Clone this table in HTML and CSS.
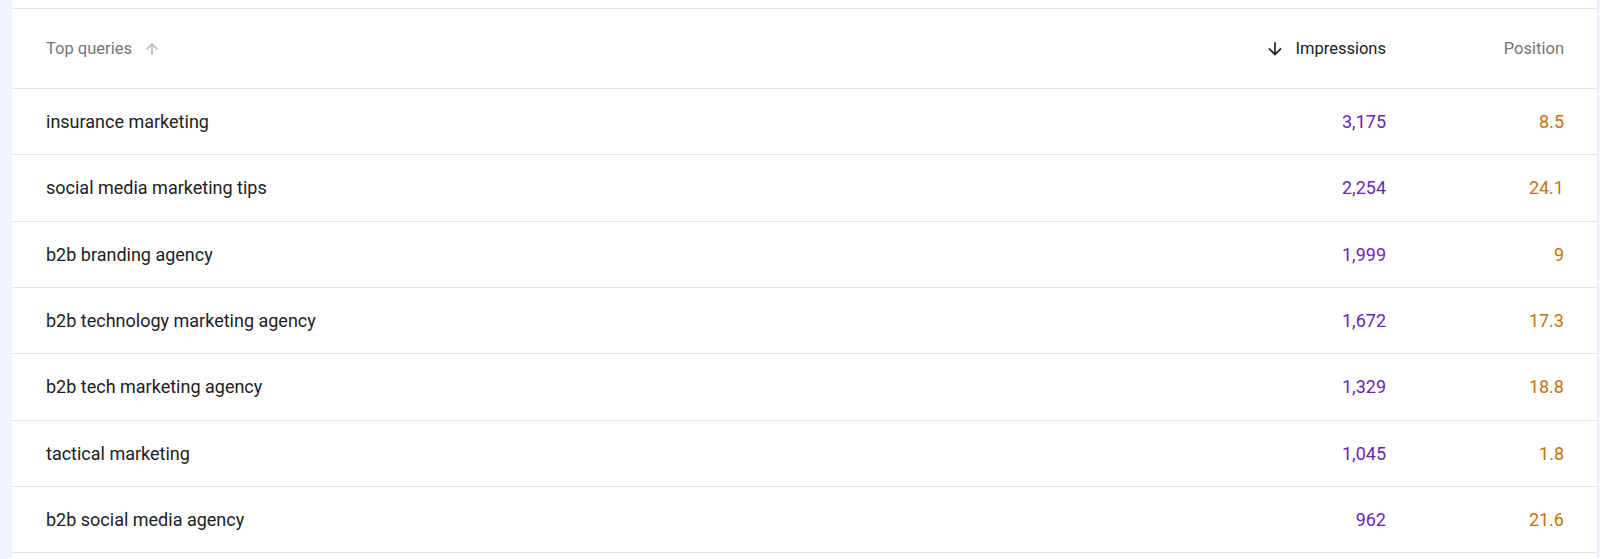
FILE: index.html
```html
<!DOCTYPE html>
<html>
<head>
<meta charset="utf-8">
<link rel="stylesheet" href="styles.css">
</head>
<body>
<div class="page">
  <div class="card">
    <div class="spacer"></div>
    <div class="table">
      <div class="row head">
        <div class="cell q"><span class="h-muted">Top queries</span>
          <svg class="ico up" width="18" height="18" viewBox="0 0 24 24"><path d="M4 12l1.41 1.41L11 7.83V20h2V7.83l5.58 5.59L20 12l-8-8-8 8z" fill="currentColor"/></svg>
        </div>
        <div class="cell num"><svg class="ico down" width="20" height="20" viewBox="0 0 24 24"><path d="M20 12l-1.41-1.41L13 16.17V4h-2v12.17l-5.58-5.59L4 12l8 8 8-8z" fill="currentColor"/></svg><span class="h-dark">Impressions</span></div>
        <div class="cell num"><span class="h-muted">Position</span></div>
      </div>
      <div class="row"><div class="cell q">insurance marketing</div><div class="cell num imp">3,175</div><div class="cell num pos">8.5</div></div>
      <div class="row"><div class="cell q">social media marketing tips</div><div class="cell num imp">2,254</div><div class="cell num pos">24.1</div></div>
      <div class="row"><div class="cell q">b2b branding agency</div><div class="cell num imp">1,999</div><div class="cell num pos">9</div></div>
      <div class="row"><div class="cell q">b2b technology marketing agency</div><div class="cell num imp">1,672</div><div class="cell num pos">17.3</div></div>
      <div class="row"><div class="cell q">b2b tech marketing agency</div><div class="cell num imp">1,329</div><div class="cell num pos">18.8</div></div>
      <div class="row"><div class="cell q">tactical marketing</div><div class="cell num imp">1,045</div><div class="cell num pos">1.8</div></div>
      <div class="row"><div class="cell q">b2b social media agency</div><div class="cell num imp">962</div><div class="cell num pos">21.6</div></div>
    </div>
  </div>
</div>
</body>
</html>
```
FILE: styles.css
```css
html, body {
  margin: 0;
  padding: 0;
  background: #f0f4fd;
}
body {
  font-family: Roboto, "Liberation Sans", sans-serif;
  color: #202124;
}
.page {
  height: 559px;
  overflow: hidden;
  padding-left: 12px;
  padding-right: 2px;
  display: flex;
}
.card {
  flex: 1;
  background: #fff;
  border-right: 1px solid #ebedf0;
}
.spacer {
  height: 8px;
}
.table {
  border-top: 1px solid #e3e3e3;
}
.row {
  display: grid;
  grid-template-columns: 1fr 200px 178px;
  padding: 0 33px 0 34px;
  height: 65.33px;
  border-bottom: 1px solid #e3e3e3;
  align-items: center;
  font-size: 18px;
}
.row.head {
  height: 79px;
  font-size: 16.5px;
}
.cell.q {
  display: flex;
  align-items: center;
}
.cell.num {
  display: flex;
  justify-content: flex-end;
  align-items: center;
}
.h-muted {
  color: #757575;
}
.h-dark {
  color: #202124;
}
.ico.up {
  color: #b5b5b5;
  margin-left: 11px;
}
.ico.down {
  color: #202124;
  margin-right: 11px;
}
.imp {
  color: #6a26b0;
}
.pos {
  color: #c8720e;
}
```
